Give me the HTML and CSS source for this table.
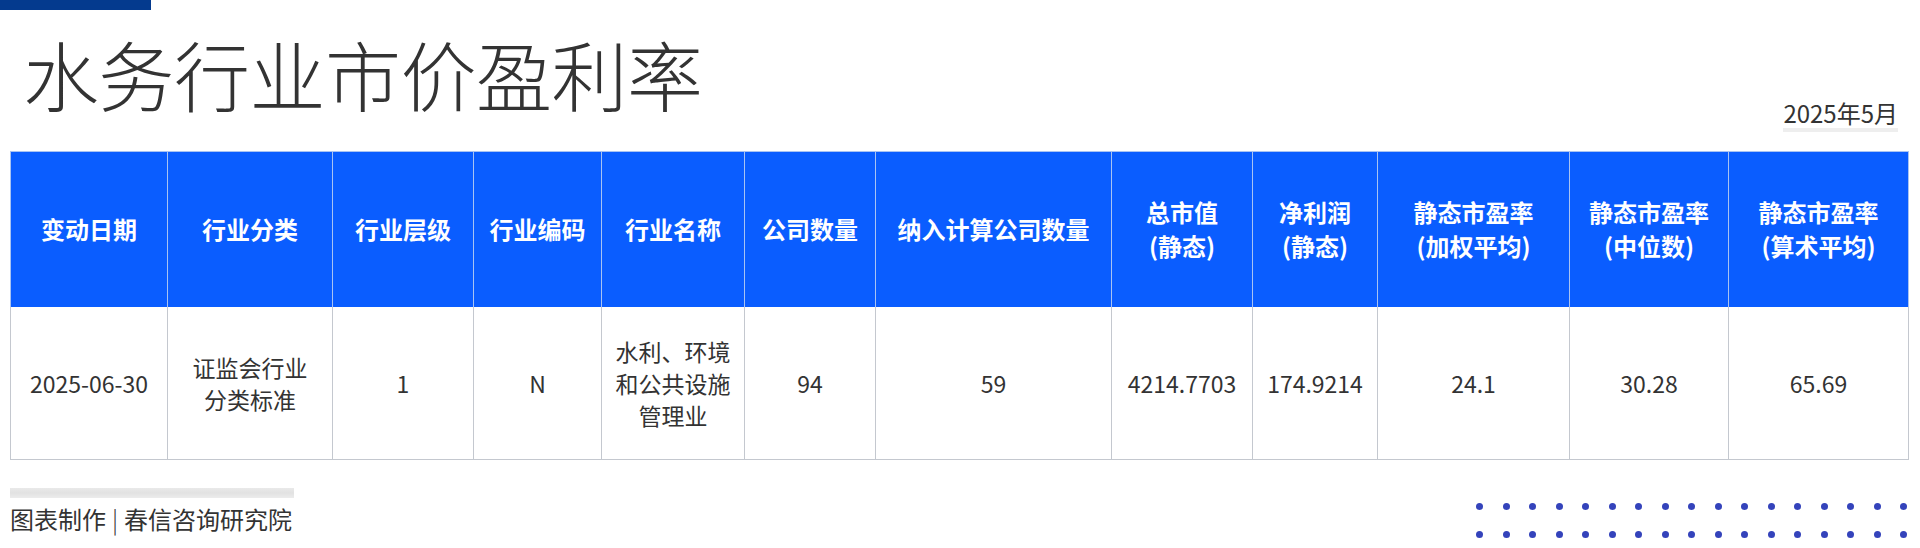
FILE: index.html
```html
<!DOCTYPE html>
<html lang="zh-CN">
<head>
<meta charset="utf-8">
<title>水务行业市价盈利率</title>
<link rel="stylesheet" href="styles.css">
</head>
<body>
<div class="topbar"></div>
<header class="head">
  <h1 class="title">水务行业市价盈利率</h1>
  <div class="date">2025年5月</div>
</header>
<table class="pe">
  <colgroup>
    <col style="width:157px"><col style="width:165px"><col style="width:141px"><col style="width:128px">
    <col style="width:143px"><col style="width:131px"><col style="width:236px"><col style="width:141px">
    <col style="width:125px"><col style="width:192px"><col style="width:159px"><col style="width:180px">
  </colgroup>
  <thead>
    <tr>
      <th>变动日期</th>
      <th>行业分类</th>
      <th>行业层级</th>
      <th>行业编码</th>
      <th>行业名称</th>
      <th>公司数量</th>
      <th>纳入计算公司数量</th>
      <th class="faint">总市值<br>(静态)</th>
      <th class="faint">净利润<br>(静态)</th>
      <th>静态市盈率<br>(加权平均)</th>
      <th>静态市盈率<br>(中位数)</th>
      <th>静态市盈率<br>(算术平均)</th>
    </tr>
  </thead>
  <tbody>
    <tr>
      <td>2025-06-30</td>
      <td>证监会行业<br>分类标准</td>
      <td>1</td>
      <td>N</td>
      <td>水利、环境<br>和公共设施<br>管理业</td>
      <td>94</td>
      <td>59</td>
      <td class="faint">4214.7703</td>
      <td class="faint">174.9214</td>
      <td>24.1</td>
      <td>30.28</td>
      <td>65.69</td>
    </tr>
  </tbody>
</table>
<footer class="foot">
  <div class="credit">
    <div class="credit-bar"></div>
    <div class="credit-text">图表制作<span class="sep">|</span>春信咨询研究院</div>
  </div>
  <div class="dots">
    <i></i><i></i><i></i><i></i><i></i><i></i><i></i><i></i><i></i><i></i><i></i><i></i><i></i><i></i><i></i><i></i><i></i>
    <i></i><i></i><i></i><i></i><i></i><i></i><i></i><i></i><i></i><i></i><i></i><i></i><i></i><i></i><i></i><i></i><i></i>
  </div>
</footer>
</body>
</html>
```
FILE: styles.css
```css
* { box-sizing: border-box; }
html, body { margin: 0; padding: 0; background: #ffffff; }
body {
  width: 1920px;
  height: 548px;
  overflow: hidden;
  font-family: "Noto Sans CJK SC", "Noto Sans", sans-serif;
  color: #333333;
}
.topbar {
  width: 151px;
  height: 10px;
  background: #043a8e;
}
.head {
  height: 122px;
  display: flex;
  justify-content: space-between;
  align-items: flex-end;
  padding: 0 22px 0 23px;
}
.title {
  align-self: flex-start;
  margin: 25px 0 0 0;
  font-size: 76px;
  line-height: 1;
  font-weight: 300;
  letter-spacing: -0.5px;
  color: #333333;
}
.date {
  font-size: 24px;
  line-height: 1;
  padding-bottom: 3px;
  border-bottom: 4px solid #eeeeee;
  color: #333333;
}
.pe {
  margin: 19px 0 0 10px;
  width: 1898px;
  table-layout: fixed;
  border-collapse: collapse;
}
.pe th {
  height: 155px;
  background: #0a5dff;
  color: #ffffff;
  font-size: 24px;
  font-weight: 700;
  line-height: 34px;
  text-align: center;
  vertical-align: middle;
  padding: 0;
  border-top: 1px solid #a9c3f2;
  border-left: 1px solid #a9c3f2;
  border-right: 1px solid #a9c3f2;
}
.pe th.faint { border-left-color: #0a55e6; }
.pe td {
  height: 153px;
  font-size: 23px;
  line-height: 32px;
  text-align: center;
  vertical-align: middle;
  padding: 0;
  color: #333333;
  border-left: 1px solid #c4c8cf;
  border-right: 1px solid #c4c8cf;
  border-bottom: 1px solid #c4c8cf;
}
.pe td.faint { border-left-color: #f1f2f4; }
.foot {
  margin-top: 28px;
  display: flex;
  justify-content: space-between;
  align-items: flex-start;
  padding: 0 13px 0 10px;
}
.credit { width: 284px; }
.credit-bar {
  height: 10px;
  background: linear-gradient(#e9e9e9, #e2e2e2 50%, #ececec);
}
.credit-text {
  margin-top: 9px;
  font-size: 24px;
  line-height: 1;
  white-space: nowrap;
  color: #333333;
}
.sep {
  margin: 0 6px;
  font-weight: 300;
}
.dots {
  margin-top: 15px;
  display: grid;
  grid-template-columns: repeat(17, 7px);
  column-gap: 19.5px;
  row-gap: 21px;
}
.dots i {
  display: block;
  width: 7px;
  height: 7px;
  border-radius: 50%;
  background: #3443bb;
}
```
